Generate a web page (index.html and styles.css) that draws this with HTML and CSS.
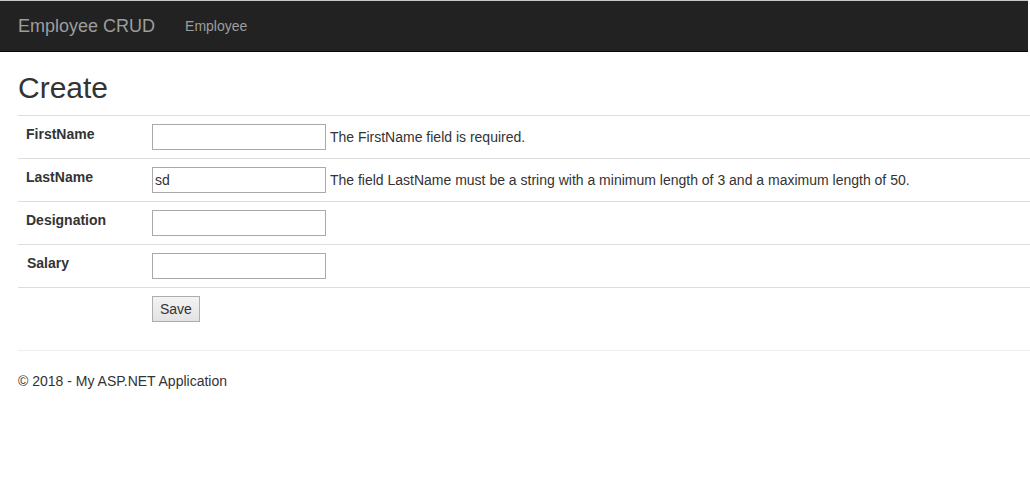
FILE: index.html
```html
<!DOCTYPE html>
<html>
<head>
<meta charset="utf-8">
<title>Create</title>
<link rel="stylesheet" href="styles.css">
</head>
<body>
<nav class="navbar">
  <a class="brand" href="#">Employee CRUD</a>
  <a class="nav-link" href="#">Employee</a>
</nav>
<main class="content">
  <h2 class="title">Create</h2>
  <table class="form-table">
    <tr>
      <td class="label-cell"><label>FirstName</label></td>
      <td><input class="field" type="text" value=""> <span class="msg">The FirstName field is required.</span></td>
    </tr>
    <tr>
      <td class="label-cell"><label>LastName</label></td>
      <td><input class="field" type="text" value="sd"> <span class="msg">The field LastName must be a string with a minimum length of 3 and a maximum length of 50.</span></td>
    </tr>
    <tr>
      <td class="label-cell"><label>Designation</label></td>
      <td><input class="field" type="text" value=""></td>
    </tr>
    <tr>
      <td class="label-cell"><label class="salary">Salary</label></td>
      <td><input class="field" type="text" value=""></td>
    </tr>
    <tr>
      <td class="label-cell"></td>
      <td><button class="btn" type="button">Save</button></td>
    </tr>
  </table>
  <hr class="rule">
  <footer class="footer">
    <p>&copy; 2018 - My ASP.NET Application</p>
  </footer>
</main>
</body>
</html>
```
FILE: styles.css
```css
html, body {
  margin: 0;
  padding: 0;
  background: #fff;
}
body {
  font-family: "Liberation Sans", Arial, sans-serif;
  font-size: 14px;
  line-height: 20px;
  color: #333;
}
.navbar {
  display: flex;
  align-items: center;
  height: 50px;
  margin-right: 2px;
  background: #222;
  border-top: 1px solid #c8c8c8;
  border-bottom: 1px solid #080808;
  padding-left: 18px;
  box-sizing: content-box;
}
.navbar a {
  text-decoration: none;
}
.brand {
  font-size: 18px;
  line-height: 20px;
  color: #9d9d9d;
  margin-right: 30px;
}
.nav-link {
  font-size: 14px;
  color: #9d9d9d;
}
.content {
  padding-left: 18px;
}
.title {
  font-size: 30px;
  line-height: 33px;
  font-weight: 500;
  margin: 19px 0 11px;
}
.form-table {
  width: 100%;
  border-collapse: collapse;
  border-spacing: 0;
}
.form-table td {
  border-top: 1px solid #ddd;
  padding: 8px;
  vertical-align: top;
  line-height: 20px;
}
.form-table td.label-cell {
  width: 110px;
}
.label-cell label {
  font-weight: bold;
  display: inline-block;
  margin-top: -1px;
}
.label-cell .salary {
  margin-left: 1px;
}
.field {
  width: 174px;
  height: 26px;
  box-sizing: border-box;
  border: 1px solid #a9a9a9;
  padding: 1px 2px;
  margin: 0;
  font-family: "Liberation Sans", Arial, sans-serif;
  font-size: 14px;
  color: #333;
  vertical-align: top;
}
.msg {
  display: inline-block;
  margin-top: 3px;
}
.btn {
  height: 26px;
  box-sizing: border-box;
  padding: 1px 7px;
  border: 1px solid #adadad;
  border-radius: 0;
  background: linear-gradient(#f3f3f3, #e3e3e3);
  font-family: "Liberation Sans", Arial, sans-serif;
  font-size: 14px;
  color: #333;
  margin: 0;
}
.rule {
  border: 0;
  border-top: 1px solid #eee;
  margin: 20px 0 20px;
}
.footer p {
  margin: 0;
}
```
